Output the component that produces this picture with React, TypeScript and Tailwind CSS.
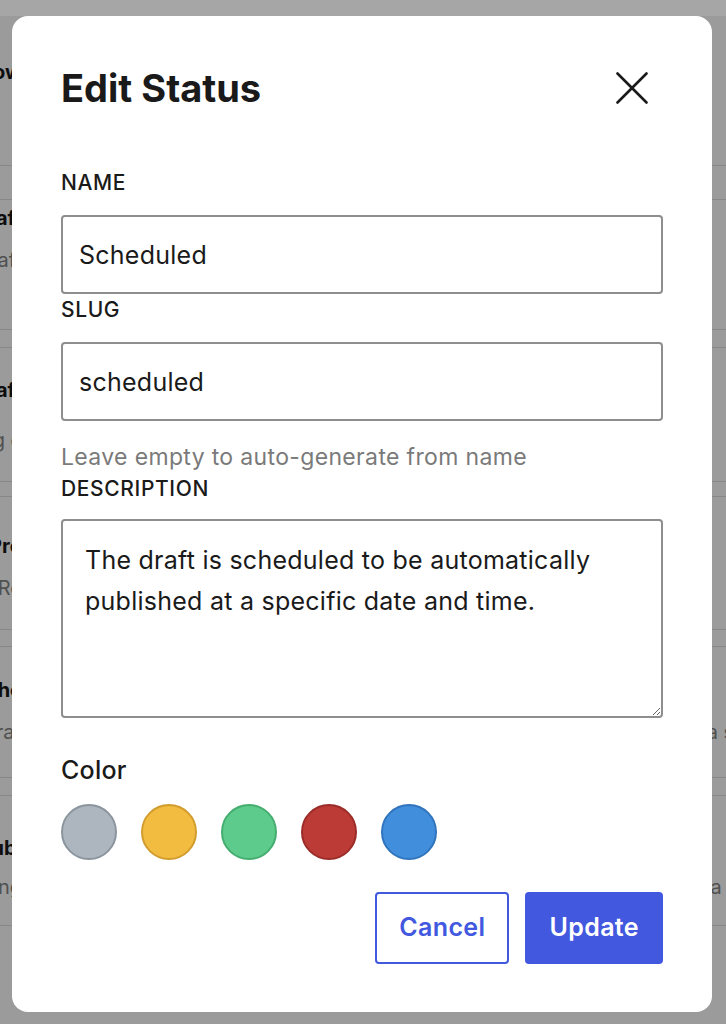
import React from "react";

type Row = {
  h: string;
  pad: string;
  title?: string;
  sub?: string;
  gap?: string;
  right?: string;
};

// Rows of the status list that sits under the dialog.
const rows: Row[] = [
  { h: "h-[150px]", pad: "pt-[44px]", title: "Workflow" },
  { h: "h-[34px]", pad: "" },
  { h: "h-[130px]", pad: "pt-[6px]", title: "Draft", sub: "Draft", gap: "mt-[18px]" },
  { h: "h-[18px]", pad: "" },
  { h: "h-[134px]", pad: "pt-[30px]", title: "Draft", sub: "Pending c", gap: "mt-[26px]" },
  { h: "h-[15px]", pad: "" },
  { h: "h-[133px]", pad: "pt-[37px]", title: "Pro", sub: "Re", gap: "mt-[18px]" },
  { h: "h-[17px]", pad: "" },
  { h: "h-[131px]", pad: "pt-[31px]", title: "Sche", sub: "Draf", gap: "mt-[18px]", right: "e at a specific" },
  { h: "h-[18px]", pad: "" },
  { h: "h-[130px]", pad: "pt-[40px]", title: "Publ", sub: "Chang", gap: "mt-[15px]", right: "is at a" },
];

function Backdrop() {
  return (
    <div className="flex h-[1024px] w-[726px] flex-col overflow-hidden bg-[#eeeeee]">
      <div className="h-[16px] shrink-0 bg-white" />
      {rows.map((r, i) => (
        <div key={i} className={`flex shrink-0 border-b border-[#d2d2d2] ${r.h}`}>
          <div className={`flex w-[22px] shrink-0 flex-col items-end overflow-hidden ${r.pad}`}>
            {r.title && (
              <div className="whitespace-nowrap text-[20px] font-bold leading-[24px] text-[#161616]">{r.title}</div>
            )}
            {r.sub && (
              <div className={`whitespace-nowrap text-[20px] leading-[24px] text-[#7c7c7c] ${r.gap ?? ""}`}>{r.sub}</div>
            )}
          </div>
          <div className="flex-1" />
          <div className={`flex w-[60px] shrink-0 flex-col overflow-hidden ${r.pad}`}>
            {r.right && (
              <>
                <div className="h-[24px]" />
                <div className={`whitespace-nowrap text-[20px] leading-[24px] text-[#7c7c7c] ${r.gap ?? ""}`}>{r.right}</div>
              </>
            )}
          </div>
        </div>
      ))}
    </div>
  );
}

const swatches = [
  "bg-[#adb6bf] border-[#8c959e]",
  "bg-[#f2bc41] border-[#d19d2e]",
  "bg-[#5dcb8b] border-[#46ad71]",
  "bg-[#bd3b37] border-[#9b2d29]",
  "bg-[#418fdc] border-[#3074bd]",
];

function Label({ children, className = "" }: { children: React.ReactNode; className?: string }) {
  return (
    <div className={`text-[21px] font-medium leading-[28px] tracking-[0.03em] text-[#1a1a1a] ${className}`}>
      {children}
    </div>
  );
}

const fieldClass =
  "mt-[18px] box-border h-[79px] w-full rounded-[4px] border-2 border-[#8e8e8e] px-[16px] text-[25px] tracking-[0.01em] text-[#1a1a1a] outline-none";

function EditStatusDialog() {
  return (
    <div className="fixed left-[12px] top-[16px] flex h-[996px] w-[700px] flex-col rounded-[16px] bg-white px-[49px] pt-[49px]">
      <div className="flex h-[46px] items-center justify-between">
        <h2 className="text-[38px] font-bold leading-[46px] text-[#1a1a1a]">Edit Status</h2>
        <button className="mr-[15px] flex h-[32px] w-[32px] items-center justify-center text-[#1a1a1a]" aria-label="Close">
          <svg width="32" height="32" viewBox="0 0 32 32" fill="none" stroke="currentColor" strokeWidth="2.6" strokeLinecap="round">
            <line x1="1.5" y1="1.5" x2="30.5" y2="30.5" />
            <line x1="30.5" y1="1.5" x2="1.5" y2="30.5" />
          </svg>
        </button>
      </div>

      <Label className="mt-[58px]">NAME</Label>
      <input readOnly value="Scheduled" className={fieldClass} />

      <Label className="mt-[2px]">SLUG</Label>
      <input readOnly value="scheduled" className={fieldClass} />

      <div className="mt-[21px] text-[23px] leading-[30px] tracking-[0.015em] text-[#7a7a7a]">
        Leave empty to auto-generate from name
      </div>

      <Label className="mt-[3px]">DESCRIPTION</Label>
      <textarea
        readOnly
        defaultValue="The draft is scheduled to be automatically published at a specific date and time."
        className="mt-[16px] box-border h-[199px] w-full resize rounded-[4px] border-2 border-[#8e8e8e] px-[22px] pt-[19px] text-[25px] leading-[41px] tracking-[0.01em] text-[#1a1a1a] outline-none"
      />

      <div className="mt-[36px] text-[25px] font-medium leading-[32px] tracking-[0.01em] text-[#1a1a1a]">Color</div>
      <div className="mt-[18px] flex gap-[24px]">
        {swatches.map((s, i) => (
          <button key={i} className={`box-border h-[56px] w-[56px] rounded-full border-2 ${s}`} aria-label={`Color ${i + 1}`} />
        ))}
      </div>

      <div className="mt-[32px] flex justify-end gap-[16px]">
        <button className="box-border h-[72px] rounded-[4px] border-2 border-[#4158df] bg-white px-[22px] text-[25px] font-semibold tracking-[0.015em] text-[#4158df]">
          Cancel
        </button>
        <button className="box-border h-[72px] rounded-[4px] bg-[#4158df] px-[24px] text-[25px] font-semibold tracking-[0.015em] text-white">
          Update
        </button>
      </div>
    </div>
  );
}

export default function App() {
  return (
    <div className="relative h-[1024px] w-[726px] overflow-hidden font-['Inter',sans-serif]">
      <Backdrop />
      <div className="fixed inset-0 bg-black/[0.35]" />
      <EditStatusDialog />
    </div>
  );
}
